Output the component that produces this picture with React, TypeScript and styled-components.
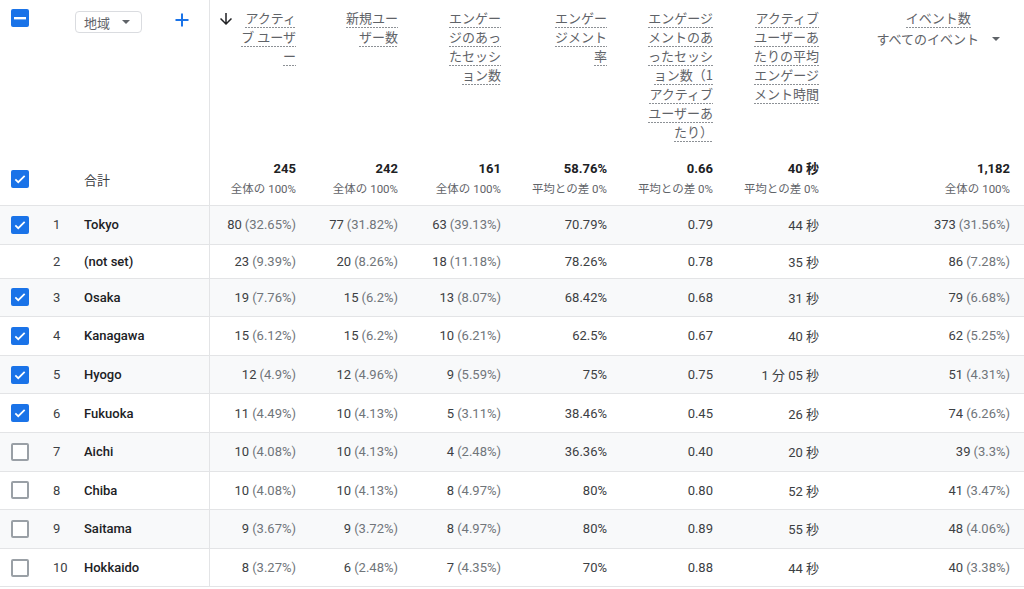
import React from 'react';
import styled, { createGlobalStyle } from 'styled-components';

const GlobalStyle = createGlobalStyle`
  html, body { margin: 0; padding: 0; background: #fff; }
  body {
    font-family: Roboto, "Noto Sans CJK JP", sans-serif;
    color: #3c4043;
    overflow: hidden;
  }
`;

const TEMPLATE = '53px 31px 126px 96px 102px 103px 106px 106px 106px 1fr';
const BLUE = '#1a73e8';
const LINE = '#e3e4e6';

const Table = styled.div`
  width: 1024px;
  display: flex;
  flex-direction: column;
`;

const HeaderRow = styled.div`
  display: grid;
  grid-template-columns: ${TEMPLATE};
  height: 206px;
  box-sizing: border-box;
  border-bottom: 1px solid ${LINE};
`;

const Row = styled.div<{ $shaded?: boolean; $compact?: boolean }>`
  display: grid;
  grid-template-columns: ${TEMPLATE};
  height: ${(p) => (p.$compact ? 34 : 38.6)}px;
  box-sizing: border-box;
  border-bottom: 1px solid ${LINE};
  background: ${(p) => (p.$shaded ? '#f8f9fa' : '#fff')};
  font-size: 13px;
`;

const LeftHeader = styled.div`
  grid-column: 1 / 4;
  border-right: 1px solid ${LINE};
  display: flex;
  flex-direction: column;
  justify-content: space-between;
  padding-bottom: 6px;
`;

const LeftTop = styled.div`
  display: flex;
  align-items: flex-start;
  padding: 9px 20px 0 11px;
`;

const DimChip = styled.div`
  margin-left: 46px;
  margin-top: 2px;
  width: 67px;
  height: 22px;
  box-sizing: border-box;
  border: 1px solid #dadce0;
  border-radius: 4px;
  display: flex;
  align-items: center;
  padding-left: 8px;
  font-family: "Noto Sans CJK JP", sans-serif;
  font-size: 13px;
  color: #5f6368;
  gap: 12px;
`;

const Caret = styled.span`
  display: inline-block;
  width: 0;
  height: 0;
  border-left: 4px solid transparent;
  border-right: 4px solid transparent;
  border-top: 4px solid #5f6368;
`;

const AddButton = styled.div`
  margin-left: auto;
  margin-top: 4px;
  width: 14px;
  height: 14px;
  display: flex;
`;

const LeftTotals = styled.div`
  display: grid;
  grid-template-columns: 53px 31px 1fr;
  align-items: center;
  height: 40px;
`;

const TotalLabel = styled.span`
  grid-column: 3;
  font-family: "Noto Sans CJK JP", sans-serif;
  font-size: 13px;
  color: #3c4043;
`;

const CheckSlot = styled.div`
  padding-left: 11px;
  display: flex;
  align-items: center;
`;

const Box = styled.span<{ $on?: boolean }>`
  width: 18px;
  height: 18px;
  box-sizing: border-box;
  border-radius: 2px;
  background: ${(p) => (p.$on ? BLUE : '#fff')};
  border: ${(p) => (p.$on ? 'none' : '2px solid #9aa0a6')};
  display: flex;
  align-items: center;
  justify-content: center;
`;

const HeadCell = styled.div<{ $last?: boolean }>`
  display: flex;
  flex-direction: column;
  justify-content: space-between;
  align-items: flex-end;
  padding: 8px ${(p) => (p.$last ? 14 : 10)}px 6px 0;
  min-width: 0;
`;

const LabelWrap = styled.div`
  display: flex;
  align-items: flex-start;
  gap: 9px;
`;

const SortIcon = styled.span`
  display: flex;
  margin-top: 5px;
`;

const Label = styled.span`
  font-family: "Noto Sans CJK JP", sans-serif;
  font-size: 13px;
  line-height: 19px;
  color: #5f6368;
  text-align: right;
  display: block;
`;

const Dotted = styled.span`
  background-image: linear-gradient(to right, #8d9196 60%, transparent 0);
  background-size: 3px 1px;
  background-repeat: repeat-x;
  background-position: 0 100%;
  -webkit-box-decoration-break: clone;
  box-decoration-break: clone;
  padding-bottom: 1px;
`;

const EventHead = styled.div`
  margin-right: 10px;
  display: flex;
  flex-direction: column;
  align-items: center;
  font-family: "Noto Sans CJK JP", sans-serif;
  font-size: 13px;
  line-height: 19px;
  color: #5f6368;
`;

const EventSelect = styled.div`
  display: flex;
  align-items: center;
  gap: 13px;
  margin-top: 1px;
`;

const Totals = styled.div`
  display: flex;
  flex-direction: column;
  align-items: flex-end;
`;

const TotalValue = styled.span`
  font-size: 13px;
  line-height: 20px;
  font-weight: 700;
  color: #202124;
`;

const TotalSub = styled.span`
  font-size: 11.5px;
  line-height: 20px;
  color: #5f6368;
`;

const IndexCell = styled.div`
  display: flex;
  align-items: center;
  color: #3c4043;
`;

const NameCell = styled.div`
  display: flex;
  align-items: center;
  font-weight: 500;
  color: #202124;
  border-right: 1px solid ${LINE};
`;

const Cell = styled.div<{ $last?: boolean }>`
  display: flex;
  align-items: center;
  justify-content: flex-end;
  padding-right: ${(p) => (p.$last ? 14 : 10)}px;
  color: #3c4043;
  white-space: nowrap;
`;

const Pct = styled.span`
  color: #70757a;
  margin-left: 3px;
`;

const CheckMark = () => (
  <svg width="14" height="14" viewBox="0 0 24 24">
    <path d="M4 12.5l5 5L20 6.5" fill="none" stroke="#fff" strokeWidth="3" />
  </svg>
);

const Dash = () => (
  <svg width="12" height="12" viewBox="0 0 12 12">
    <rect x="0" y="5" width="12" height="2.4" fill="#fff" />
  </svg>
);

const Check = ({ on, mixed }: { on?: boolean; mixed?: boolean }) => (
  <Box $on={on || mixed}>{mixed ? <Dash /> : on ? <CheckMark /> : null}</Box>
);

type Col = { lines: string[]; total: string; sub: string };

const cols: Col[] = [
  { lines: ['アクティ', 'ブ ユーザ', 'ー'], total: '245', sub: '全体の 100%' },
  { lines: ['新規ユー', 'ザー数'], total: '242', sub: '全体の 100%' },
  { lines: ['エンゲー', 'ジのあっ', 'たセッシ', 'ョン数'], total: '161', sub: '全体の 100%' },
  { lines: ['エンゲー', 'ジメント', '率'], total: '58.76%', sub: '平均との差 0%' },
  {
    lines: ['エンゲージ', 'メントのあ', 'ったセッシ', 'ョン数（1', 'アクティブ', 'ユーザーあ', 'たり）'],
    total: '0.66',
    sub: '平均との差 0%',
  },
  { lines: ['アクティブ', 'ユーザーあ', 'たりの平均', 'エンゲージ', 'メント時間'], total: '40 秒', sub: '平均との差 0%' },
];

type Data = {
  name: string;
  check: 'on' | 'off' | 'none';
  v: [string, string, string, string, string, string, string];
};

const rows: Data[] = [
  { name: 'Tokyo', check: 'on', v: ['80 (32.65%)', '77 (31.82%)', '63 (39.13%)', '70.79%', '0.79', '44 秒', '373 (31.56%)'] },
  { name: '(not set)', check: 'none', v: ['23 (9.39%)', '20 (8.26%)', '18 (11.18%)', '78.26%', '0.78', '35 秒', '86 (7.28%)'] },
  { name: 'Osaka', check: 'on', v: ['19 (7.76%)', '15 (6.2%)', '13 (8.07%)', '68.42%', '0.68', '31 秒', '79 (6.68%)'] },
  { name: 'Kanagawa', check: 'on', v: ['15 (6.12%)', '15 (6.2%)', '10 (6.21%)', '62.5%', '0.67', '40 秒', '62 (5.25%)'] },
  { name: 'Hyogo', check: 'on', v: ['12 (4.9%)', '12 (4.96%)', '9 (5.59%)', '75%', '0.75', '1 分 05 秒', '51 (4.31%)'] },
  { name: 'Fukuoka', check: 'on', v: ['11 (4.49%)', '10 (4.13%)', '5 (3.11%)', '38.46%', '0.45', '26 秒', '74 (6.26%)'] },
  { name: 'Aichi', check: 'off', v: ['10 (4.08%)', '10 (4.13%)', '4 (2.48%)', '36.36%', '0.40', '20 秒', '39 (3.3%)'] },
  { name: 'Chiba', check: 'off', v: ['10 (4.08%)', '10 (4.13%)', '8 (4.97%)', '80%', '0.80', '52 秒', '41 (3.47%)'] },
  { name: 'Saitama', check: 'off', v: ['9 (3.67%)', '9 (3.72%)', '8 (4.97%)', '80%', '0.89', '55 秒', '48 (4.06%)'] },
  { name: 'Hokkaido', check: 'off', v: ['8 (3.27%)', '6 (2.48%)', '7 (4.35%)', '70%', '0.88', '44 秒', '40 (3.38%)'] },
];

const Value = ({ text }: { text: string }) => {
  const m = text.match(/^(\S+) (\(.*\))$/);
  if (m) {
    return (
      <span>
        {m[1]}
        <Pct>{m[2]}</Pct>
      </span>
    );
  }
  return <span>{text}</span>;
};

const HeaderLabel = ({ lines }: { lines: string[] }) => (
  <Label>
    {lines.map((l, i) => (
      <React.Fragment key={i}>
        {i > 0 && <br />}
        <Dotted>{l}</Dotted>
      </React.Fragment>
    ))}
  </Label>
);

export default function App() {
  return (
    <>
      <GlobalStyle />
      <Table>
        <HeaderRow>
          <LeftHeader>
            <LeftTop>
              <Check mixed />
              <DimChip>
                地域
                <Caret />
              </DimChip>
              <AddButton>
                <svg width="14" height="14" viewBox="0 0 14 14">
                  <path d="M7 0.5v13M0.5 7h13" stroke={BLUE} strokeWidth="2" />
                </svg>
              </AddButton>
            </LeftTop>
            <LeftTotals>
              <CheckSlot>
                <Check on />
              </CheckSlot>
              <TotalLabel>合計</TotalLabel>
            </LeftTotals>
          </LeftHeader>
          {cols.map((c, i) => (
            <HeadCell key={i}>
              <LabelWrap>
                {i === 0 && (
                  <SortIcon>
                    <svg width="12" height="12" viewBox="4 4 16 16">
                      <path d="M20 12l-1.41-1.41L13 16.17V4h-2v12.17l-5.58-5.59L4 12l8 8 8-8z" fill="#202124" />
                    </svg>
                  </SortIcon>
                )}
                <HeaderLabel lines={c.lines} />
              </LabelWrap>
              <Totals>
                <TotalValue>{c.total}</TotalValue>
                <TotalSub>{c.sub}</TotalSub>
              </Totals>
            </HeadCell>
          ))}
          <HeadCell $last>
            <EventHead>
              <Dotted>イベント数</Dotted>
              <EventSelect>
                すべてのイベント
                <Caret />
              </EventSelect>
            </EventHead>
            <Totals>
              <TotalValue>1,182</TotalValue>
              <TotalSub>全体の 100%</TotalSub>
            </Totals>
          </HeadCell>
        </HeaderRow>
        {rows.map((r, i) => (
          <Row key={r.name} $shaded={i % 2 === 0} $compact={r.check === 'none'}>
            <CheckSlot>{r.check !== 'none' && <Check on={r.check === 'on'} />}</CheckSlot>
            <IndexCell>{i + 1}</IndexCell>
            <NameCell>{r.name}</NameCell>
            {r.v.map((v, j) => (
              <Cell key={j} $last={j === 6}>
                <Value text={v} />
              </Cell>
            ))}
          </Row>
        ))}
      </Table>
    </>
  );
}
